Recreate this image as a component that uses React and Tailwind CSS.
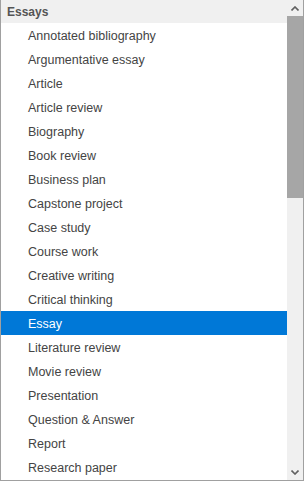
import React from 'react';

const items = [
    'Annotated bibliography',
    'Argumentative essay',
    'Article',
    'Article review',
    'Biography',
    'Book review',
    'Business plan',
    'Capstone project',
    'Case study',
    'Course work',
    'Creative writing',
    'Critical thinking',
    'Essay',
    'Literature review',
    'Movie review',
    'Presentation',
    'Question & Answer',
    'Report',
    'Research paper',
];

const App = () => {
    return (
        <div className="w-[305px] h-[482px] bg-white overflow-hidden" style={{ fontFamily: '"Liberation Sans", Arial, sans-serif' }}>
            <div className="w-[304px] h-[481px] flex border-l border-r border-b border-[#a0a0a0] bg-white">
                {/* option list */}
                <div className="flex-1 flex flex-col overflow-hidden">
                    <div className="h-[23px] shrink-0 bg-[#f0f0f0] pl-[6px] pt-[1px] flex items-center text-[12px] font-bold text-[#555]">
                        Essays
                    </div>
                    {items.map((item) => (
                        <div
                            key={item}
                            className={
                                item === 'Essay'
                                    ? 'h-[24px] shrink-0 pl-[27px] pt-[2px] flex items-center text-[12.5px] bg-[#0078d7] text-white'
                                    : 'h-[24px] shrink-0 pl-[27px] pt-[2px] flex items-center text-[12.5px] text-[#444]'
                            }
                        >
                            {item}
                        </div>
                    ))}
                </div>

                {/* scrollbar */}
                <div className="w-[16px] shrink-0 bg-[#f0f0f0] flex flex-col">
                    <div className="h-[16px] flex items-center justify-center">
                        <svg width="8" height="5" viewBox="0 0 8 5">
                            <path d="M0.5 4.5 L4 1 L7.5 4.5" fill="none" stroke="#606060" strokeWidth="1.6" />
                        </svg>
                    </div>
                    <div className="h-[182px] bg-[#a6a6a6]"></div>
                    <div className="flex-1"></div>
                    <div className="h-[16px] flex items-center justify-center">
                        <svg width="8" height="5" viewBox="0 0 8 5">
                            <path d="M0.5 0.5 L4 4 L7.5 0.5" fill="none" stroke="#606060" strokeWidth="1.6" />
                        </svg>
                    </div>
                </div>
            </div>
        </div>
    );
};

export default App;
